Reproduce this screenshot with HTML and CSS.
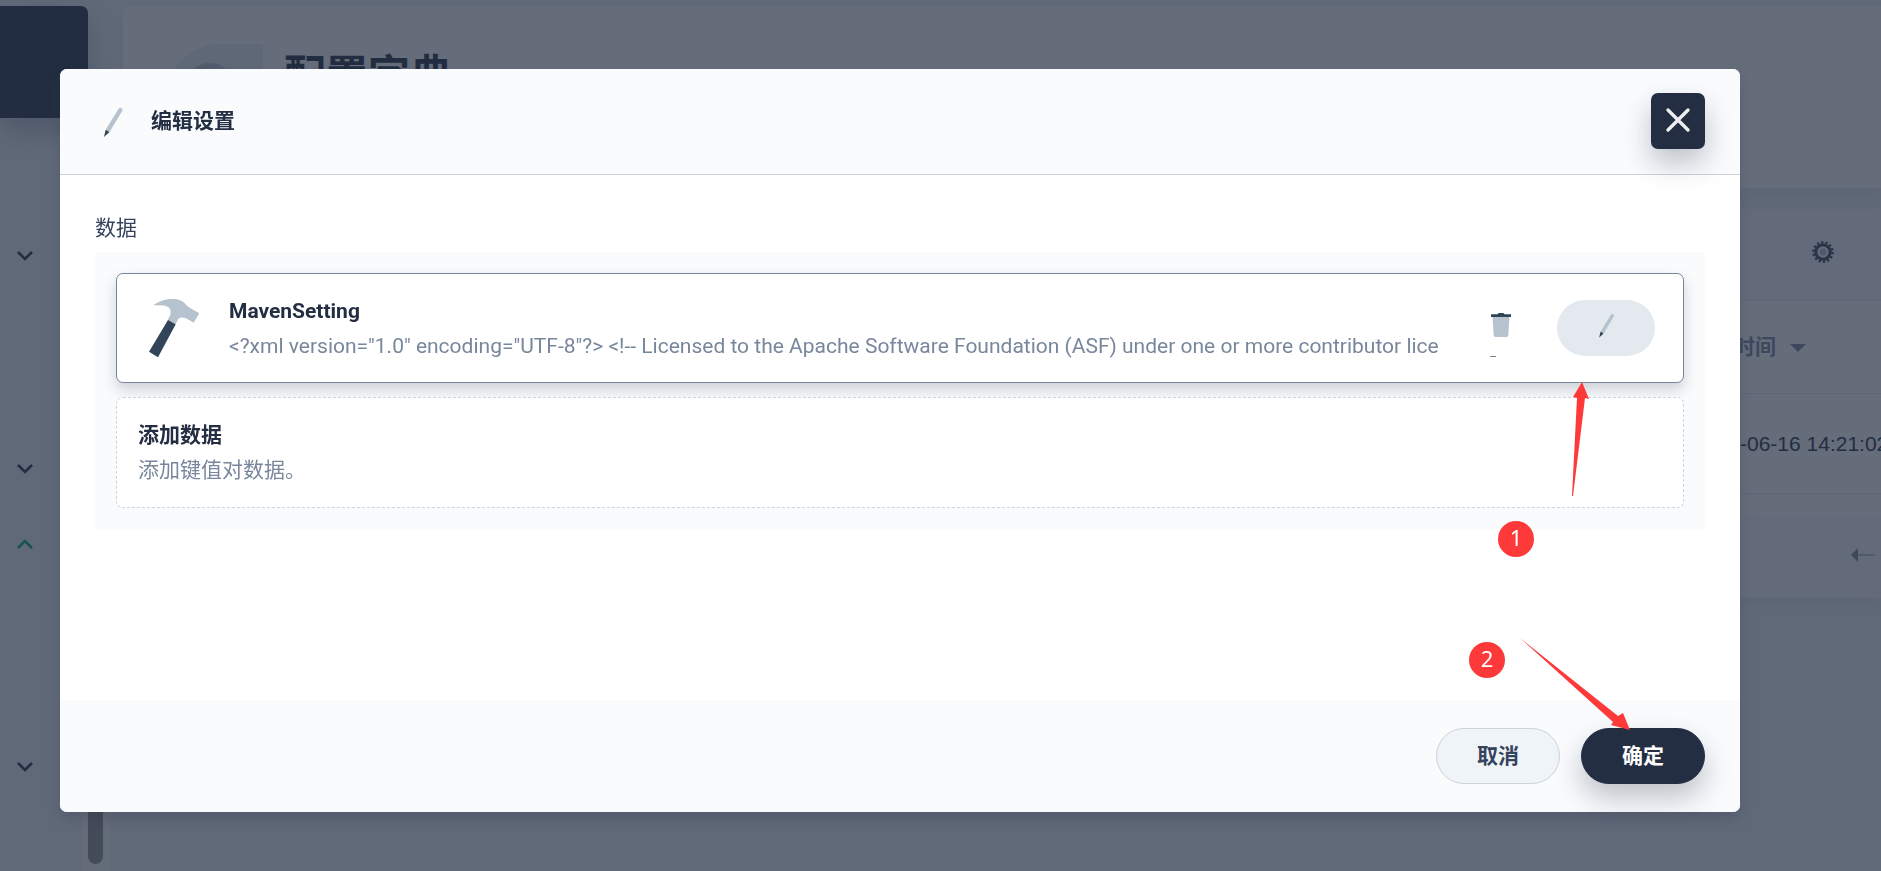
FILE: index.html
```html
<!DOCTYPE html>
<html lang="zh-CN">
<head>
<meta charset="utf-8">
<title>编辑设置</title>
<link rel="stylesheet" href="styles.css">
</head>
<body>
<svg class="defs" aria-hidden="true">
  <symbol id="pencil" viewBox="0 0 35 35">
    <path d="M23.600 4.800A2 2 0 0 1 27.200 6.900L14.600 28 10.700 25.800Z" fill="#b6c2cd"/>
    <path d="M10.600 26 12.800 26.800 14.200 28.300 9 33Z" fill="#324558"/>
  </symbol>
  <symbol id="chevron" viewBox="0 0 18 12">
    <path d="M2 2 9 9 16 2" fill="none" stroke="currentColor" stroke-width="2.6"/>
  </symbol>
</svg>

<div class="page">
  <aside class="sidebar">
    <div class="cluster"></div>
    <div class="nav-scroll">
      <nav class="nav">
        <button class="nav-item nav-long" aria-label="展开"><svg><use href="#chevron"/></svg></button>
        <button class="nav-item" aria-label="展开"><svg><use href="#chevron"/></svg></button>
        <button class="nav-item nav-open nav-long" aria-label="收起"><svg><use href="#chevron"/></svg></button>
        <button class="nav-item" aria-label="展开"><svg><use href="#chevron"/></svg></button>
      </nav>
      <div class="track"><div class="thumb"></div></div>
    </div>
  </aside>
  <main class="main">
    <section class="banner">
      <div class="banner-icon"><span></span></div>
      <h1>配置字典</h1>
    </section>
    <section class="list">
      <div class="toolbar">
        <button class="icon-btn" aria-label="设置">
          <svg width="22" height="22" viewBox="0 0 22 22">
            <circle cx="11" cy="11" r="9.6" fill="none" stroke="#324558" stroke-width="2.6" stroke-dasharray="2.2 2.108"/>
            <circle cx="11" cy="11" r="7.2" fill="none" stroke="#324558" stroke-width="3"/>
            <circle cx="11" cy="11" r="3.4" fill="#b6c2cd"/>
          </svg>
        </button>
      </div>
      <table class="table">
        <thead><tr><th></th><th class="time">时间<i class="caret"></i></th></tr></thead>
        <tbody><tr><td></td><td class="time date">-06-16 14:21:02</td></tr></tbody>
      </table>
      <div class="pager">
        <button class="icon-btn" aria-label="上一页">
          <svg width="24" height="14" viewBox="0 0 24 14"><path d="M7 6h17v2H7z" fill="#b6c2cd"/><path d="M0 7 7 0v14z" fill="#79879c"/></svg>
        </button>
      </div>
    </section>
  </main>
</div>

<div class="overlay">
  <div class="dialog" role="dialog" aria-labelledby="dialog-title">
    <header class="dialog-head">
      <svg class="head-icon"><use href="#pencil"/></svg>
      <h2 id="dialog-title">编辑设置</h2>
      <button class="close" aria-label="关闭">
        <svg width="26" height="26" viewBox="0 0 26 26"><path d="M3 3 23 23M23 3 3 23" stroke="#eceef0" stroke-width="3.4" stroke-linecap="round"/></svg>
      </button>
    </header>
    <div class="dialog-body">
      <div class="label">数据</div>
      <div class="items">
        <div class="item item-active">
          <svg class="hammer" viewBox="0 0 70 70">
            <path d="M15.3 12.3C20 8.5 27 6 34 6c7 0 11 2 13.5 5 1.600 2.200 3 3.200 5 4.300L61.300 20.300 55.700 29.700 48.500 25.600C45 24 42 24 40.300 26L37.400 31.300 29.700 27 32.300 22C33.800 16 31 13.200 25.500 12.600 22 12.300 18.500 12.500 15.300 12.300Z" fill="#b6c2cd"/>
            <path d="M30 27 37.700 31.300 20 64.200 11 58.800Z" fill="#324558"/>
          </svg>
          <div class="item-text">
            <strong>MavenSetting</strong>
            <p>&lt;?xml version="1.0" encoding="UTF-8"?&gt; &lt;!-- Licensed to the Apache Software Foundation (ASF) under one or more contributor lice</p>
          </div>
          <div class="actions">
            <button class="action action-delete" aria-label="删除">
              <svg viewBox="0 0 28 28">
                <path d="M5.500 5h17l-1.200 19a2 2 0 0 1-2 2H8.700a2 2 0 0 1-2-2Z" fill="#b6c2cd"/>
                <path d="M4 3.200h6.500L11.500 2h5l1 1.200H24V6H4Z" fill="#324558"/>
              </svg>
            </button>
            <button class="action action-edit" aria-label="编辑"><svg><use href="#pencil"/></svg></button>
          </div>
        </div>
        <div class="item item-add">
          <div class="item-text">
            <strong>添加数据</strong>
            <p>添加键值对数据。</p>
          </div>
        </div>
      </div>
    </div>
    <footer class="dialog-foot">
      <button class="btn">取消</button>
      <button class="btn btn-primary">确定</button>
    </footer>

    <div class="note note-edit">
      <svg width="120" height="180" viewBox="0 0 120 180"><path d="M84 1 75 16 79 17 74 115 75 115 87 17 91 18Z" fill="#fd3939"/></svg>
      <span class="badge">1</span>
    </div>
    <div class="note note-ok">
      <svg width="170" height="100" viewBox="0 0 170 100"><path d="M51 6 144 90 142 93 161 98 154 81 149 84Z" fill="#fd3939"/></svg>
      <span class="badge">2</span>
    </div>
  </div>
</div>
</body>
</html>
```
FILE: styles.css
```css
* { box-sizing: border-box; }
body {
  margin: 0;
  height: 100vh;
  overflow: hidden;
  background: #eff4f9;
  color: #242e42;
  font: 21px/35px Roboto, "Noto Sans CJK SC", sans-serif;
}
h1, h2, p { margin: 0; }
button { border: 0; padding: 0; background: none; font: inherit; color: inherit; }
svg { display: block; flex: none; }
.defs { position: absolute; width: 0; height: 0; }

/* Page behind the dialog */
.page { display: flex; gap: 14px; height: 100vh; padding-top: 6px; }
.sidebar { flex: none; display: flex; flex-direction: column; width: 109px; }
.cluster {
  flex: none;
  width: 88px;
  height: 112px;
  border-radius: 0 7px 7px 0;
  background: #242e42;
  box-shadow: 0 14px 28px rgba(36, 46, 66, .28);
}
.nav-scroll { flex: 1; display: flex; justify-content: space-between; min-height: 0; }
.nav { display: flex; flex-direction: column; padding: 110px 0 0 16px; }
.nav-item { height: 56px; margin-bottom: 19px; }
.nav-long { margin-bottom: 157px; }
.nav-open { margin-bottom: 167px; color: #00aa72; }
.nav-item svg { width: 18px; height: 12px; }
.nav-open svg { transform: rotate(180deg); }
.track { display: flex; padding: 0 6px 7px; background: #fafafa; }
.thumb { width: 15px; border-radius: 8px; background: #909090; }

.main { flex: 1; min-width: 0; }
.banner {
  display: flex;
  gap: 21px;
  height: 182px;
  padding: 38px 42px;
  border-radius: 7px 0 0 7px;
  background: #fff;
  box-shadow: 0 7px 14px rgba(36, 46, 66, .06);
}
.banner-icon {
  width: 98px;
  height: 98px;
  padding: 19px 21px;
  border-radius: 56px 0 42px 42px;
  background: #eaf0f5;
}
.banner-icon span { display: block; width: 48px; height: 48px; border-radius: 24px; background: #c1cad4; }
.banner h1 { font-size: 42px; line-height: 63px; }
.list {
  margin-top: 21px;
  background: #fff;
  box-shadow: 0 7px 14px rgba(36, 46, 66, .06);
}
.toolbar { display: flex; justify-content: flex-end; align-items: center; height: 91px; padding: 0 47px 5px; background: #f9fbfd; }
.table { width: 100%; table-layout: fixed; border-collapse: collapse; margin-bottom: 21px; }
.table th, .table td { padding: 0; text-align: left; white-space: nowrap; border-bottom: 1px solid #e3e9ef; }
.table th { height: 93px; border-top: 1px solid #e3e9ef; color: #79879c; }
.table td { height: 100px; }
.table .time { width: 147px; }
.table .date { padding-left: 6px; font-family: "Liberation Sans", sans-serif; }
.caret {
  display: inline-block;
  margin-left: 14px;
  vertical-align: middle;
  border: 8px solid transparent;
  border-top-color: #79879c;
  border-bottom: 0;
}
.pager { display: flex; justify-content: flex-end; align-items: center; height: 83px; padding: 0 6px 4px; background: #f9fbfd; }

/* Dialog */
.overlay {
  position: fixed;
  inset: 0;
  display: grid;
  padding: 69px 141px 59px 60px;
  background: rgba(36, 46, 66, .7);
}
.dialog {
  position: relative;
  display: flex;
  flex-direction: column;
  min-width: 0;
  border-radius: 7px;
  background: #fff;
  box-shadow: 0 7px 14px rgba(36, 46, 66, .2);
}
.dialog-head {
  display: flex;
  align-items: center;
  gap: 21px;
  padding: 24px 35px 25px;
  border-bottom: 1px solid #ccd3db;
  border-radius: 7px 7px 0 0;
  background: #f9fbfd;
}
.head-icon { width: 35px; height: 35px; }
.dialog-head h2 { flex: 1; font-size: 21px; line-height: 35px; }
.close {
  display: grid;
  place-items: center;
  width: 54px;
  height: 56px;
  padding-bottom: 2px;
  border-radius: 7px;
  background: #242e42;
  box-shadow: 0 14px 28px rgba(36, 46, 66, .28);
}
.dialog-body { flex: 1; padding: 36px 35px 35px; }
.label { margin-bottom: 6px; color: #36435c; }
.items { display: flex; flex-direction: column; gap: 14px; padding: 21px; background: #f9fbfd; }
.item {
  display: flex;
  align-items: center;
  gap: 21px;
  padding: 19px 28px 19px 21px;
  border: 1px solid #79879c;
  border-radius: 7px;
  background: #fff;
}
.item-active { box-shadow: 0 7px 14px rgba(36, 46, 66, .2); }
.item-add { padding: 20px 21px 19px; border: 1px dashed #ccd3db; }
.hammer { width: 70px; height: 70px; }
.item-text { flex: 1; min-width: 0; overflow: hidden; white-space: nowrap; }
.item-active .item-text { margin: 1px 0 -1px; }
.item-text strong { display: block; }
.item-text p { color: #79879c; }
.actions { display: flex; gap: 7px; margin-left: -14px; }
.action {
  position: relative;
  display: grid;
  place-items: center;
  width: 98px;
  height: 56px;
  padding-bottom: 6px;
  border-radius: 28px;
}
.action svg { width: 28px; height: 28px; }
.action-edit { background: #e3e9ef; }
.action-delete::after {
  content: "";
  position: absolute;
  left: 38px;
  bottom: -1px;
  width: 6px;
  height: 1px;
  background: #79879c;
}
.dialog-foot {
  display: flex;
  justify-content: flex-end;
  gap: 21px;
  padding: 28px 35px;
  border-radius: 0 0 7px 7px;
  background: #f9fbfd;
}
.btn {
  height: 56px;
  padding: 0 40px;
  border: 1px solid #ccd3db;
  border-radius: 28px;
  background: #eff4f9;
  color: #36435c;
  font-weight: bold;
}
.btn-primary {
  border-color: #242e42;
  background: #242e42;
  color: #fff;
  box-shadow: 0 14px 28px rgba(36, 46, 66, .28);
}

/* Step markers over the dialog */
.note { position: absolute; pointer-events: none; }
.note-edit { top: 312px; right: 122px; }
.note-ok { right: 101px; bottom: 80px; }
.badge {
  position: absolute;
  width: 36px;
  height: 36px;
  border-radius: 18px;
  background: #fd3939;
  color: #fff;
  font: 22px/32px "Noto Sans", sans-serif;
  text-align: center;
}
.note-edit .badge { left: 0; top: 140px; }
.note-ok .badge { left: 0; top: 10px; }
```
